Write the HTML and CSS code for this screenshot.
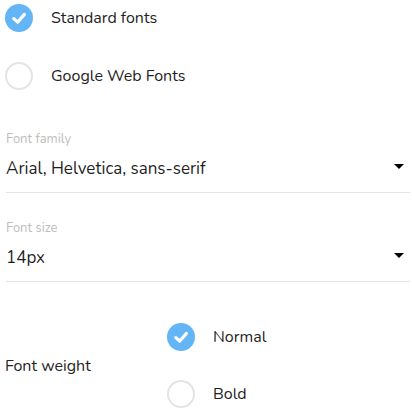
FILE: index.html
```html
<!DOCTYPE html>
<html lang="en">
<head>
<meta charset="utf-8">
<title>Font settings</title>
<link rel="stylesheet" href="styles.css">
</head>
<body>
<div class="panel">
  <div class="radio-group source">
    <div class="radio checked">
      <span class="dot"><svg viewBox="0 0 28 28" width="28" height="28"><path d="M8.8 14.6 L12.6 18.2 L19.4 10.4" fill="none" stroke="#fff" stroke-width="3.2" stroke-linecap="round" stroke-linejoin="round"/></svg></span>
      <span class="radio-text">Standard fonts</span>
    </div>
    <div class="radio">
      <span class="dot"></span>
      <span class="radio-text">Google Web Fonts</span>
    </div>
  </div>

  <div class="field first">
    <div class="field-label">Font family</div>
    <div class="field-control">
      <span class="field-value">Arial, Helvetica, sans-serif</span>
      <span class="caret"></span>
    </div>
  </div>

  <div class="field">
    <div class="field-label">Font size</div>
    <div class="field-control">
      <span class="field-value">14px</span>
      <span class="caret"></span>
    </div>
  </div>

  <div class="weight-row">
    <div class="weight-label">Font weight</div>
    <div class="radio-group weight">
      <div class="radio checked">
        <span class="dot"><svg viewBox="0 0 28 28" width="28" height="28"><path d="M8.8 14.6 L12.6 18.2 L19.4 10.4" fill="none" stroke="#fff" stroke-width="3.2" stroke-linecap="round" stroke-linejoin="round"/></svg></span>
        <span class="radio-text">Normal</span>
      </div>
      <div class="radio">
        <span class="dot"></span>
        <span class="radio-text">Bold</span>
      </div>
    </div>
  </div>
</div>
</body>
</html>
```

FILE: styles.css
```css
html, body {
  margin: 0;
  padding: 0;
  background: #ffffff;
}

body {
  font-family: "Nunito", "Lato", "Noto Sans", sans-serif;
  color: #1f1f1f;
  font-size: 17px;
}

.panel {
  padding: 4px 2px 0 5px;
}

.radio-group {
  display: flex;
  flex-direction: column;
}

.source {
  gap: 30px;
}

.weight {
  gap: 29px;
}

.radio {
  display: flex;
  align-items: center;
  height: 28px;
}

.dot {
  width: 28px;
  height: 28px;
  box-sizing: border-box;
  border-radius: 50%;
  border: 2px solid #e4e4e4;
  flex: none;
  display: flex;
  align-items: center;
  justify-content: center;
}

.radio.checked .dot {
  background: #64b5f6;
  border: none;
}

.dot svg {
  display: block;
}

.radio-text {
  margin-left: 18px;
  font-size: 16px;
  line-height: 20px;
}

.field {
  border-bottom: 1px solid #e4e4e4;
  margin-left: 1px;
  margin-top: 27px;
  padding-bottom: 11px;
}

.field.first {
  margin-top: 41px;
}

.field-label {
  font-size: 13px;
  line-height: 16px;
  color: #bdbdbd;
}

.field-control {
  display: flex;
  justify-content: space-between;
  align-items: center;
  margin-top: 10px;
  height: 24px;
}

.field-value {
  font-size: 17px;
  line-height: 24px;
}

.caret {
  width: 0;
  height: 0;
  border-left: 5px solid transparent;
  border-right: 5px solid transparent;
  border-top: 5px solid #000;
  margin-right: 6px;
  margin-top: -6px;
}

.weight-row {
  display: flex;
  align-items: center;
  margin-top: 41px;
}

.weight-label {
  width: 162px;
  font-size: 16px;
  line-height: 20px;
}
```
